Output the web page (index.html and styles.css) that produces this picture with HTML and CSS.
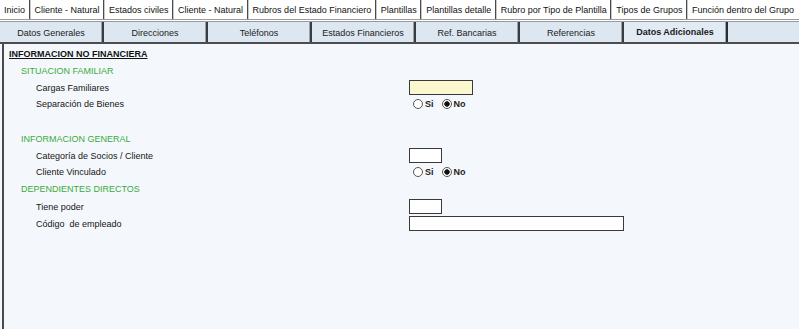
FILE: index.html
```html
<!DOCTYPE html>
<html lang="es">
<head>
<meta charset="utf-8">
<title>Datos Adicionales</title>
<link rel="stylesheet" href="styles.css">
</head>
<body>
<nav class="menu">
  <span class="menu-item">Inicio</span>
  <span class="menu-item">Cliente - Natural</span>
  <span class="menu-item">Estados civiles</span>
  <span class="menu-item">Cliente - Natural</span>
  <span class="menu-item">Rubros del Estado Financiero</span>
  <span class="menu-item">Plantillas</span>
  <span class="menu-item">Plantillas detalle</span>
  <span class="menu-item">Rubro por Tipo de Plantilla</span>
  <span class="menu-item">Tipos de Grupos</span>
  <span class="menu-item last">Función dentro del Grupo</span>
</nav>
<div class="tabs">
  <span class="tab">Datos Generales</span>
  <span class="tab">Direcciones</span>
  <span class="tab">Teléfonos</span>
  <span class="tab">Estados Financieros</span>
  <span class="tab">Ref. Bancarias</span>
  <span class="tab">Referencias</span>
  <span class="tab active">Datos Adicionales</span>
</div>
<main class="panel">
  <div class="title">INFORMACION NO FINANCIERA</div>

  <div class="section s1">SITUACION FAMILIAR</div>
  <div class="row r-box gap3">
    <span class="label">Cargas Familiares</span>
    <span class="field"><input class="txt yellow w63" type="text"></span>
  </div>
  <div class="row r-radio gap2">
    <span class="label">Separación de Bienes</span>
    <span class="field radios">
      <input class="radio" type="radio" name="sep"><span class="rlabel">Si</span>
      <input class="radio" type="radio" name="sep" checked><span class="rlabel">No</span>
    </span>
  </div>

  <div class="section s2">INFORMACION GENERAL</div>
  <div class="row r-box gap3">
    <span class="label">Categoría de Socios / Cliente</span>
    <span class="field"><input class="txt w33" type="text"></span>
  </div>
  <div class="row r-radio gap2">
    <span class="label">Cliente Vinculado</span>
    <span class="field radios">
      <input class="radio" type="radio" name="vin"><span class="rlabel">Si</span>
      <input class="radio" type="radio" name="vin" checked><span class="rlabel">No</span>
    </span>
  </div>

  <div class="section s3">DEPENDIENTES DIRECTOS</div>
  <div class="row r-box gap4">
    <span class="label">Tiene poder</span>
    <span class="field"><input class="txt w33" type="text"></span>
  </div>
  <div class="row r-box gap2">
    <span class="label">Código&nbsp; de empleado</span>
    <span class="field"><input class="txt w214" type="text"></span>
  </div>
</main>
</body>
</html>
```

FILE: styles.css
```css
* { box-sizing: border-box; }

html, body {
  margin: 0;
  padding: 0;
  height: 100%;
}

body {
  background: #f4f8fc;
  font-family: "Liberation Sans", Arial, sans-serif;
  font-size: 9px;
  color: #111;
  display: flex;
  flex-direction: column;
}

/* top menu */
.menu {
  display: flex;
  align-items: stretch;
  height: 22px;
  background: #fff;
  border-bottom: 3px double #9a9a9a;
  white-space: nowrap;
  overflow: hidden;
}

.menu-item {
  display: flex;
  align-items: center;
  padding: 0 3.5px 0 4px;
  height: 19px;
  border-right: 1px solid #4a4a4a;
  box-shadow: 1px 0 0 #c8c8c8;
  margin-right: 1px;
  color: #111;
}

.menu-item.last {
  border-right: none;
  box-shadow: none;
}

/* tabs */
.tabs {
  display: flex;
  height: 22px;
  background: #dde7f1;
  border-bottom: 2px solid #4d4d4d;
}

.tab {
  width: 104px;
  flex: none;
  display: flex;
  align-items: center;
  justify-content: center;
  padding-top: 1px;
  border-right: 2px solid #3c3c3c;
  box-shadow: inset -1px 0 0 #9aa4ae;
  color: #1a1a1a;
}

.tab.active {
  font-weight: bold;
  align-items: flex-start;
  padding-top: 5px;
  background: #e2ebf4;
  border-right: 2px solid #2c2c2c;
}

/* content panel */
.panel {
  flex: 1;
  margin-left: 2px;
  border-left: 2px solid #4a4a4a;
  padding: 4px 0 0 5px;
  display: flex;
  flex-direction: column;
}

.title {
  font-weight: bold;
  text-decoration: underline;
  line-height: 12px;
  color: #111;
}

.section {
  color: #3bab3b;
  line-height: 12px;
  padding-left: 12px;
}

.section.s1 { margin-top: 5px; }
.section.s2 { margin-top: 22px; }
.section.s3 { margin-top: 4px; }

.row {
  display: grid;
  grid-template-columns: 400px 1fr;
  align-items: center;
}

.row.r-box { height: 15px; }
.row.r-radio { height: 14px; }
.row.gap2 { margin-top: 2px; }
.row.gap3 { margin-top: 3px; }
.row.gap4 { margin-top: 4px; }

.label {
  padding-left: 27px;
  color: #141414;
}

.field {
  display: flex;
  align-items: center;
}

.txt {
  height: 15px;
  margin: 0;
  padding: 0;
  border: 1px solid #3a3a3a;
  background: #fff;
  font: inherit;
}

.txt.yellow { background: #fbf8d0; }
.txt.w63 { width: 64px; }
.txt.w33 { width: 33px; }
.txt.w214 { width: 215px; }

.radios {
  padding-left: 4px;
}

.radio {
  appearance: none;
  -webkit-appearance: none;
  width: 10px;
  height: 10px;
  margin: 0;
  border: 1px solid #555;
  border-radius: 50%;
  background: #fff;
}

.radio:checked {
  background: radial-gradient(circle, #111 0, #111 2.4px, #fff 3px);
}

.rlabel {
  font-weight: bold;
  margin: 0 8px 0 2px;
  color: #222;
}
```
